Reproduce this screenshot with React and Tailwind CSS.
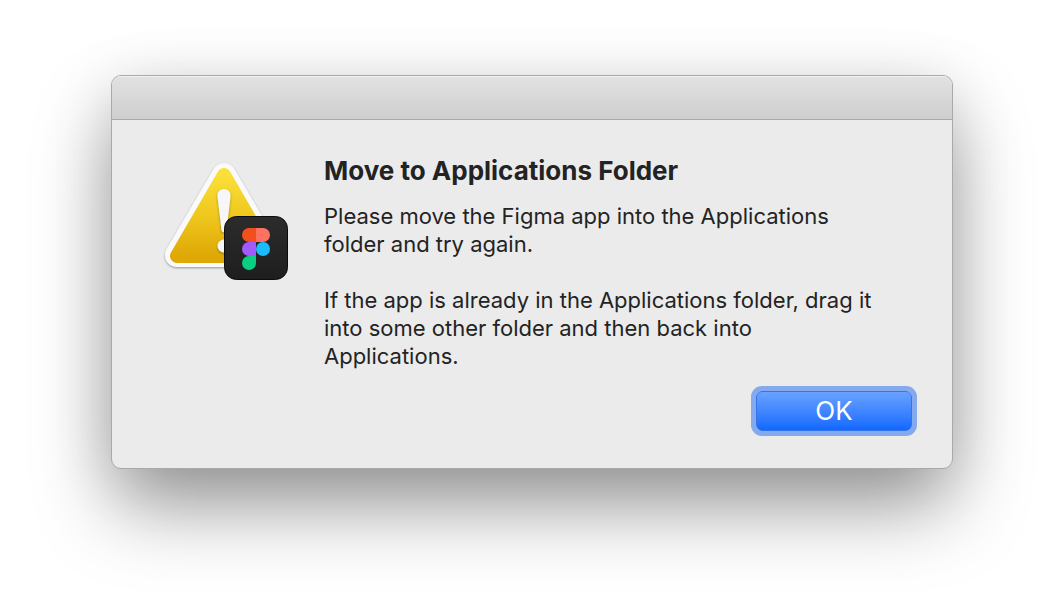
function FigmaMark() {
    return (
        <g>
            <rect x="64.5" y="56.5" width="63" height="63" rx="12" fill="url(#badge)" stroke="#0b0b0b" />
            <path d="M96 68h-7a7 7 0 0 0 0 14h7z" fill="#f24e1e" />
            <path d="M96 68h7a7 7 0 0 1 0 14h-7z" fill="#ff7262" />
            <path d="M96 82h-7a7 7 0 0 0 0 14h7z" fill="#a259ff" />
            <circle cx="103" cy="89" r="7" fill="#1abcfe" />
            <path d="M89 96h7v7a7 7 0 1 1-7-7z" fill="#0acf83" />
        </g>
    );
}

function WarningIcon() {
    return (
        <svg viewBox="0 0 128 124" className="w-32 shrink-0" role="img" aria-label="Warning">
            <defs>
                <linearGradient id="caution" x1="0" y1="0" x2="0" y2="1">
                    <stop offset="0" stopColor="#fbe03a" />
                    <stop offset="0.5" stopColor="#efc71d" />
                    <stop offset="1" stopColor="#dfa806" />
                </linearGradient>
                <linearGradient id="badge" x1="0" y1="0" x2="0" y2="1">
                    <stop offset="0" stopColor="#2c2c2c" />
                    <stop offset="1" stopColor="#1e1e1e" />
                </linearGradient>
                <filter id="lift" filterUnits="userSpaceOnUse" x="0" y="0" width="128" height="124">
                    <feDropShadow dx="0" dy="1" stdDeviation="1" floodColor="#1c2c3c" floodOpacity="0.45" />
                </filter>
            </defs>
            <path
                d="M64 15 L17 95 H111 Z"
                fill="#fafafa"
                stroke="#fafafa"
                strokeWidth="24"
                strokeLinejoin="round"
                filter="url(#lift)"
            />
            <path
                d="M64 15 L17 96 H111 Z"
                fill="url(#caution)"
                stroke="url(#caution)"
                strokeWidth="14"
                strokeLinejoin="round"
            />
            <g fill="#f7f7f7" filter="url(#lift)">
                <path d="M64 29c4 0 7 3 6.500 8l-4 33c-.4 3-4.600 3-5 0L57.500 37c-.5-5 2.500-8 6.500-8z" />
                <circle cx="64" cy="86" r="6.500" />
            </g>
            <FigmaMark />
        </svg>
    );
}

export default function App() {
    return (
        <main className="min-h-screen bg-white px-[111px] pt-[75px] pb-36 font-[Inter,sans-serif] text-[#232323]">
            <div
                role="alertdialog"
                aria-labelledby="alert-title"
                aria-describedby="alert-message"
                className="overflow-hidden rounded-[10px] border border-[#a9a9a9] bg-[#ebebeb] shadow-[0_40px_80px_-4px_rgba(0,0,0,0.4),0_8px_64px_rgba(0,0,0,0.1)]"
            >
                {/* Title bar */}
                <div className="h-11 border-b border-[#aaaaaa] bg-linear-to-b from-[#e2e2e2] to-[#cecece] shadow-[inset_0_1px_0_#f2f2f2]" />

                <div className="flex items-start gap-9 pt-9 pr-10 pb-[37px] pl-12">
                    <div className="flex pt-1">
                        <WarningIcon />
                    </div>
                    <div className="flex-1">
                        <h1 id="alert-title" className="text-[26px] leading-[30px] font-bold">Move to Applications Folder</h1>
                        <div id="alert-message" className="mt-4 space-y-7 pr-6 text-[22px] leading-7">
                            <p>Please move the Figma app into the Applications folder and try again.</p>
                            <p>If the app is already in the Applications folder, drag it into some other folder and then back into Applications.</p>
                        </div>
                        <div className="mt-[21px] flex justify-end">
                            <button
                                type="button"
                                className="h-10 w-[156px] rounded-md border border-[#3374ea] bg-linear-to-b from-[#6ba3ff] to-[#0a66ff] bg-origin-border text-[26px] leading-8 text-white ring-5 ring-[#84a9ec]"
                            >
                                OK
                            </button>
                        </div>
                    </div>
                </div>
            </div>
        </main>
    );
}
